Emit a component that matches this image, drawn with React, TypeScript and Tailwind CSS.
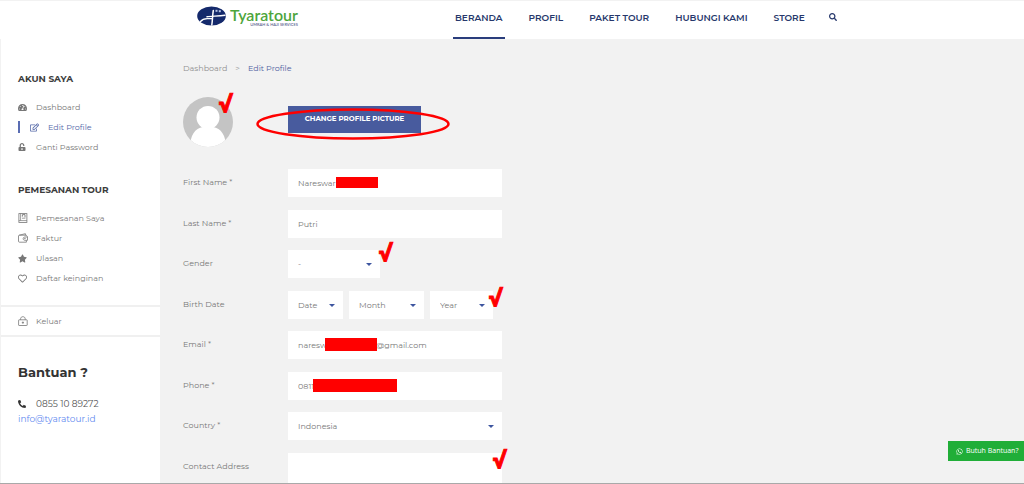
import type { ReactNode } from "react";
import {
  FaPhoneAlt,
  FaRegEdit,
  FaRegHeart,
  FaSearch,
  FaStar,
  FaTachometerAlt,
  FaUnlockAlt,
  FaWhatsapp,
} from "react-icons/fa";

const NAV_LINKS = ["BERANDA", "PROFIL", "PAKET TOUR", "HUBUNGI KAMI", "STORE"];

const FIELD_CLASS =
  "w-full rounded-none bg-white px-[10px] text-[8px] text-[#777777] outline-none";

export default function App() {
  return (
    <div className="flex min-h-screen flex-col border-b border-[#a9a9a9] bg-[#f2f2f2] font-['Montserrat','Inter',sans-serif] text-[#777777]">
      <Header />
      <div className="flex flex-1">
        <Sidebar />
        <main className="flex min-w-0 flex-1 flex-col pl-[23px] pt-[23px]">
          <nav
            aria-label="Breadcrumb"
            className="flex h-3 items-center gap-2 text-[8px] leading-3"
          >
            <a href="#dashboard" className="text-[#8f8f8f]">
              Dashboard
            </a>
            <span className="text-[#9b9b9b]">&gt;</span>
            <a href="#profile" className="text-[#4f60a0]">
              Edit Profile
            </a>
          </nav>
          <ProfilePicture />
          <ProfileForm />
        </main>
      </div>
      <a
        href="#help"
        className="fixed bottom-[23px] right-0 flex h-5 w-[76px] items-center gap-[3px] bg-[#20ae38] pl-2 font-['Open_Sans',sans-serif] text-[7px] font-medium whitespace-nowrap text-white"
      >
        <FaWhatsapp size={7} />
        Butuh Bantuan?
      </a>
    </div>
  );
}

function Header() {
  return (
    <header className="flex h-[39px] shrink-0 border-t border-[#f2f2f2] bg-white pl-[197px]">
      <a href="#home" className="flex w-64 shrink-0 items-start pt-[5px]">
        <LogoMark />
        <span className="ml-1 flex flex-col font-['Lato',sans-serif]">
          <span className="text-[16px] leading-[17px] font-semibold text-[#4da53c]">
            Tyaratour
          </span>
          <span className="self-end text-[4px] leading-[4px] font-semibold text-[#5b6691]">
            UMRAH &amp; HAJI SERVICES
          </span>
        </span>
      </a>
      <nav className="flex gap-[22px] text-[9px] font-semibold whitespace-nowrap text-[#26376b]">
        {NAV_LINKS.map((label, index) => (
          <a
            key={label}
            href={`#${label.toLowerCase().replace(" ", "-")}`}
            className={`flex items-center border-b-2 px-[2px] pb-[2px] ${
              index === 0 ? "border-[#2a3d7c]" : "border-transparent"
            }`}
          >
            {label}
          </a>
        ))}
        <button
          type="button"
          aria-label="Search"
          className="flex items-center pb-[6px]"
        >
          <FaSearch size={8} />
        </button>
      </nav>
    </header>
  );
}

function LogoMark() {
  return (
    <svg width="29" height="20" viewBox="0 0 29 20" aria-hidden="true">
      <ellipse cx="14.5" cy="10" rx="14.3" ry="9.6" fill="#14296b" />
      <g fill="none" stroke="#ffffff" strokeLinecap="round">
        <path d="M16.3 4.5C15.5 9 15.6 14 14.8 19" strokeWidth="1.5" />
        <path d="M10 10.8C14 9.8 21 10.4 28 9.2" strokeWidth="1.4" />
        <path d="M3.5 15.5C7 11 10 13.2 15.2 12.6" strokeWidth="1.3" />
      </g>
      <g fill="#b8c6e8">
        <rect x="18.5" y="3.8" width="2" height="2" />
        <rect x="21.8" y="4.2" width="2" height="2" />
      </g>
    </svg>
  );
}

function Sidebar() {
  return (
    <aside className="w-[160px] shrink-0 border-l border-[#f2f2f2] bg-white pt-[34px] text-[9px]">
      <div className="pl-[17px]">
        <h2 className="leading-3 font-bold text-[#3c3c3c]">AKUN SAYA</h2>
        <ul className="mt-3">
          <SideLink label="Dashboard" icon={<FaTachometerAlt size={9} />} />
          <SideLink label="Edit Profile" icon={<FaRegEdit size={9} />} isActive />
          <SideLink label="Ganti Password" icon={<FaUnlockAlt size={8} />} />
        </ul>
        <h2 className="mt-[27px] leading-3 font-bold text-[#3c3c3c]">
          PEMESANAN TOUR
        </h2>
        <ul className="mt-3">
          <SideLink label="Pemesanan Saya" icon={<BookIcon />} />
          <SideLink label="Faktur" icon={<WalletIcon />} />
          <SideLink label="Ulasan" icon={<FaStar size={9} />} />
          <SideLink label="Daftar keinginan" icon={<FaRegHeart size={9} />} />
        </ul>
      </div>
      <div className="mt-[17px] border-t-2 border-b-2 border-[#f0f0f0] pl-[17px]">
        <ul className="py-1">
          <SideLink label="Keluar" icon={<LockIcon />} />
        </ul>
      </div>
      <div className="pt-[25px] pl-[17px]">
        <h2 className="text-[13px] leading-5 font-bold text-[#333333]">
          Bantuan ?
        </h2>
        <p className="mt-[14px] flex items-center leading-[15px] text-[#555555]">
          <span className="w-[18px] text-[#333333]">
            <FaPhoneAlt size={8} />
          </span>
          0855 10 89272
        </p>
        <a
          href="mailto:info@tyaratour.id"
          className="block leading-[15px] text-[#648bf0]"
        >
          info@tyaratour.id
        </a>
      </div>
    </aside>
  );
}

function SideLink({
  label,
  icon,
  isActive,
}: {
  label: string;
  icon: ReactNode;
  isActive?: boolean;
}) {
  return (
    <li className="flex h-5 items-center text-[8px]">
      <a
        href={`#${label.toLowerCase().replace(" ", "-")}`}
        className={`flex h-3 items-center ${
          isActive ? "border-l-2 border-[#5a6db3] pl-[10px] text-[#5468a8]" : ""
        }`}
      >
        <span className="w-[18px]">{icon}</span>
        {label}
      </a>
    </li>
  );
}

function BookIcon() {
  return (
    <svg width="10" height="10" viewBox="0 0 10 10" fill="none" stroke="currentColor" aria-hidden="true">
      <rect x="0.9" y="0.6" width="8" height="8.8" strokeWidth="0.8" />
      <path d="M2.6 0.6V7.6M0.9 7.6H8.9M4 5.2H7.4" strokeWidth="0.7" />
      <path d="M4.4 3.6V1.6H7V4.4" strokeWidth="0.9" />
    </svg>
  );
}

function WalletIcon() {
  return (
    <svg width="10" height="10" viewBox="0 0 10 10" fill="none" stroke="currentColor" strokeWidth="0.8" aria-hidden="true">
      <path d="M8.4 3.2V2.2H1.4C0.8 2.2 0.5 2.6 0.5 3V8.2C0.5 8.8 0.9 9.2 1.4 9.2H8.4V7.4" />
      <path d="M1.2 2.2L7.4 0.7V2.2" />
      <path d="M9.5 3.3V7.3H6.8C4.6 7.3 4.6 4 6.8 4H9.5" />
      <circle cx="6.9" cy="5.6" r="0.4" />
    </svg>
  );
}

function LockIcon() {
  return (
    <svg width="10" height="10" viewBox="0 0 10 10" fill="none" stroke="currentColor" strokeWidth="0.8" aria-hidden="true">
      <rect x="0.6" y="3.8" width="8.6" height="5.7" rx="0.5" />
      <path d="M2.6 3.8V2.8C2.6 0 7.2 0 7.2 2.8V3.8" />
      <path d="M4.9 5.5V7.8M3.8 6.6H6" />
    </svg>
  );
}

function ProfilePicture() {
  return (
    <div className="mt-[23px] flex h-[50px] items-start">
      <div className="relative w-[105px] shrink-0">
        <svg width="50" height="50" viewBox="0 0 50 50" role="img" aria-label="Avatar">
          <clipPath id="avatar">
            <circle cx="25" cy="25" r="25" />
          </clipPath>
          <g clipPath="url(#avatar)">
            <rect width="50" height="50" fill="#c4c4c4" />
            <circle cx="25" cy="20.5" r="11.5" fill="#ffffff" />
            <path d="M7 50C7 39 12 31 20 30H30C38 31 43 39 43 50Z" fill="#ffffff" />
          </g>
        </svg>
        <CheckMark className="left-9 -top-1" />
      </div>
      <div className="relative mt-[9px]">
        <button
          type="button"
          className="block h-[27px] w-[133px] bg-[#485b9e] text-[7px] font-bold whitespace-nowrap text-white"
        >
          CHANGE PROFILE PICTURE
        </button>
        <svg
          width="194"
          height="32"
          viewBox="0 0 194 32"
          className="pointer-events-none absolute top-[2px] -left-8 max-w-none"
          aria-hidden="true"
        >
          <ellipse cx="97" cy="16" rx="95.5" ry="14.5" fill="none" stroke="#ff0000" strokeWidth="2.5" />
        </svg>
      </div>
    </div>
  );
}

function ProfileForm() {
  return (
    <form className="mt-[22px] flex max-w-[319px] flex-1 flex-col justify-between gap-3">
      <Row label="First Name *" id="first-name">
        <input id="first-name" defaultValue="Nareswari" className={`${FIELD_CLASS} h-7`} />
        <Redaction className="left-12 top-2 h-[11px] w-[42px]" />
      </Row>
      <Row label="Last Name *" id="last-name">
        <input id="last-name" defaultValue="Putri" className={`${FIELD_CLASS} h-7`} />
      </Row>
      <Row label="Gender" id="gender">
        <Select id="gender" label="Gender" value="-" className="w-[92px]" />
        <CheckMark className="left-[91px] -top-2" />
      </Row>
      <Row label="Birth Date" id="birth-date">
        <div className="flex gap-[6px]">
          <Select id="birth-date" label="Date" value="Date" className="w-[55px]" />
          <Select id="birth-month" label="Month" value="Month" className="w-[75px]" />
          <Select id="birth-year" label="Year" value="Year" className="w-[63px]" />
        </div>
        <CheckMark className="left-[201px] -top-1" />
      </Row>
      <Row label="Email *" id="email">
        <input
          id="email"
          defaultValue={`naresw${"\u2003".repeat(6)}\u2009@gmail.com`}
          className={`${FIELD_CLASS} h-7`}
        />
        <Redaction className="left-[37px] top-[7px] h-[13px] w-[52px]" />
      </Row>
      <Row label="Phone *" id="phone">
        <input id="phone" type="tel" defaultValue="0811" className={`${FIELD_CLASS} h-7`} />
        <Redaction className="left-[25px] top-[7px] h-[13px] w-[84px]" />
      </Row>
      <Row label="Country *" id="country">
        <Select id="country" label="Country" value="Indonesia" className="w-full" />
      </Row>
      <Row label="Contact Address" id="address">
        <textarea id="address" className={`${FIELD_CLASS} block h-[30px] resize-none`} />
        <CheckMark className="left-[205px] -top-1" />
      </Row>
    </form>
  );
}

function Row({
  label,
  id,
  children,
}: {
  label: string;
  id: string;
  children: ReactNode;
}) {
  return (
    <div className="flex items-start text-[8px]">
      <label htmlFor={id} className="w-[105px] shrink-0 leading-[26px]">
        {label}
      </label>
      <div className="relative flex-1">{children}</div>
    </div>
  );
}

function Select({
  id,
  label,
  value,
  className,
}: {
  id: string;
  label: string;
  value: string;
  className: string;
}) {
  return (
    <div className={`relative ${className}`}>
      <select
        id={id}
        aria-label={label}
        defaultValue={value}
        className={`${FIELD_CLASS} block h-7 appearance-none`}
      >
        <option>{value}</option>
      </select>
      <svg
        width="6"
        height="3"
        viewBox="0 0 6 3"
        className="pointer-events-none absolute top-[13px] right-2"
        aria-hidden="true"
      >
        <path d="M0 0H6L3 3Z" fill="#3d559f" />
      </svg>
    </div>
  );
}

function Redaction({ className }: { className: string }) {
  return <span className={`absolute bg-[#ff0000] ${className}`} />;
}

function CheckMark({ className }: { className: string }) {
  return (
    <span
      className={`pointer-events-none absolute font-['Open_Sans',sans-serif] text-[22px] leading-5 font-extrabold text-[#ff0000] [-webkit-text-stroke:1px_#ff0000] ${className}`}
    >
      √
    </span>
  );
}
